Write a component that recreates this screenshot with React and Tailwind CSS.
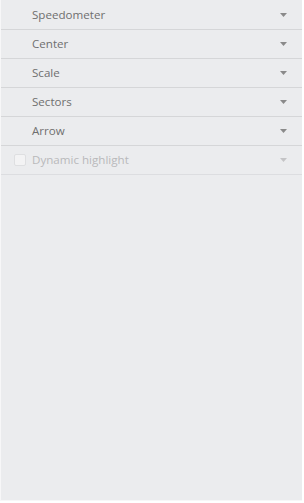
export default function App() {
  const rows = ["Speedometer", "Center", "Scale", "Sectors", "Arrow"];
  const Arrow = ({ c }) => (
    <svg width="7" height="4" viewBox="0 0 7 4" className="shrink-0">
      <path d="M0 0H7L3.5 4Z" fill={c} />
    </svg>
  );
  return (
    <div className="w-[304px] h-[503px] bg-white" style={{ fontFamily: '"Open Sans", sans-serif' }}>
      <div className="w-[302px] h-[501px] bg-[#ebecee] border-l border-b border-[#f7f7f8] flex flex-col pt-[1px]">
        {rows.map((r) => (
          <div key={r} className="h-[29px] flex items-center border-b border-[#d5d6d8] pl-[31px] pr-[15px]">
            <span className="flex-1 text-[11.6px] text-[#6f6f6f]">{r}</span>
            <Arrow c="#8a8a8a" />
          </div>
        ))}
        <div className="h-[29px] flex items-center border-b border-[#dcdde0] pl-[13px] pr-[15px]">
          <span className="w-[12px] h-[12px] rounded-[2px] border border-[#dedfe1] bg-[#f3f3f4] mr-[6px]" />
          <span className="flex-1 text-[11.6px] text-[#b9b9bb]">Dynamic highlight</span>
          <Arrow c="#c4c4c6" />
        </div>
      </div>
    </div>
  );
}
